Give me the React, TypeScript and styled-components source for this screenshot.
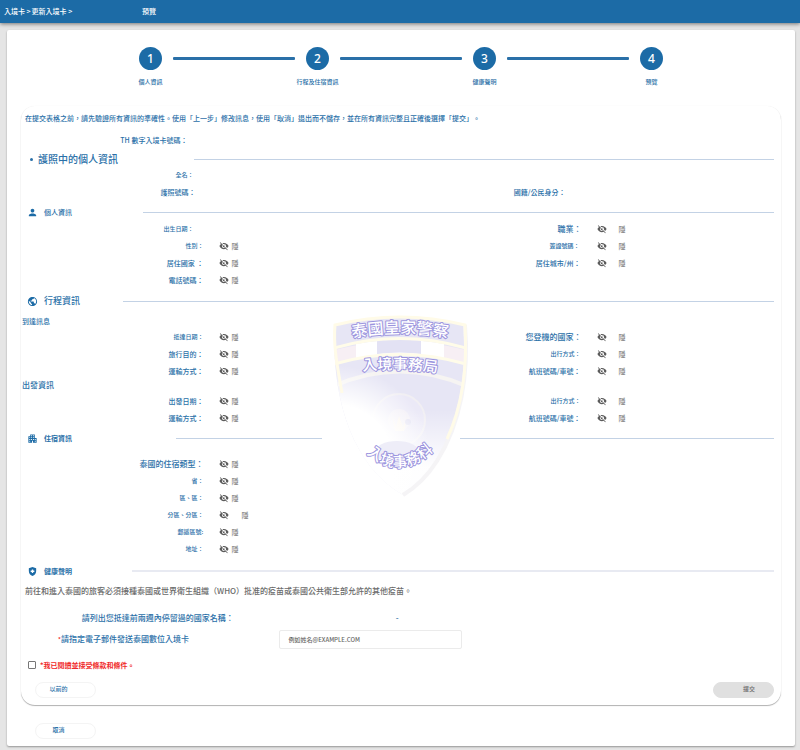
import React from "react";
import styled, { createGlobalStyle } from "styled-components";
import {
  MdApartment,
  MdHealthAndSafety,
  MdPerson,
  MdPublic,
  MdVisibilityOff,
} from "react-icons/md";

const blue = "#1c6ba6";
const textBlue = "#2a70a8";
const gray = "#6a6a6a";

const GlobalStyle = createGlobalStyle`
  * { box-sizing: border-box; }
  body {
    margin: 0;
    background: #e5e5e5;
    color: ${textBlue};
    font-family: "Noto Sans CJK TC", "Noto Sans", sans-serif;
    font-size: 7px;
    font-weight: 500;
    line-height: 12px;
    text-spacing-trim: space-all;
  }
  button, input { font-family: inherit; }
`;

const TopBar = styled.header`
  position: relative;
  display: flex;
  align-items: center;
  height: 23px;
  padding: 0 4px 2px;
  background: ${blue};
  color: #fff;
  box-shadow: 0 1px 4px rgba(0, 0, 0, 0.5);
`;

const Crumbs = styled.nav`
  display: flex;
  gap: 1px;
  width: 138px;
`;

const CrumbLink = styled.a`
  color: inherit;
  text-decoration: none;
`;

const Page = styled.main`
  padding: 7px 5px 4px 7px;
`;

const Card = styled.div`
  padding: 17px 14px 7px;
  background: #fff;
  border-radius: 2px;
  box-shadow: 0 1px 2px rgba(0, 0, 0, 0.35);
`;

const Stepper = styled.ol`
  display: flex;
  margin: 0 0 19px;
  padding: 0 118px;
  list-style: none;
`;

const Step = styled.li`
  display: flex;
  flex-direction: column;
  align-items: center;
  gap: 7px;
  width: 23px;
  font-size: 6px;
  line-height: 10px;
  white-space: nowrap;
`;

const StepNumber = styled.span`
  display: grid;
  place-items: center;
  width: 23px;
  height: 23px;
  border-radius: 50%;
  background: ${blue};
  color: #fff;
  font-family: "Noto Sans", sans-serif;
  font-size: 12px;
  line-height: 23px;
`;

const Connector = styled.li`
  flex: 1;
  height: 3px;
  margin: 10px 11px 0;
  border-radius: 1px;
  background: ${textBlue};
`;

const Panel = styled.form`
  position: relative;
  padding: 5px 0 7px;
  border-radius: 14px;
  box-shadow: 0 1px 1px rgba(0, 0, 0, 0.3), 0 0 1px rgba(0, 0, 0, 0.08);
`;

const Intro = styled.p`
  margin: 0 4px 6px;
  line-height: 14px;
`;

const Head = styled.div<{ $top: number; $gap?: number }>`
  display: flex;
  align-items: center;
  gap: ${(p) => p.$gap ?? 6}px;
  height: 14px;
  margin-top: ${(p) => p.$top}px;
  padding: 0 7px 0 6px;
`;

const HeadIcon = styled.span`
  display: grid;
  place-items: center;
  width: 11px;
  color: ${blue};
`;

const Bullet = styled.span`
  width: 3px;
  height: 3px;
  margin: 0 5px 0 3px;
  border-radius: 50%;
  background: ${textBlue};
`;

const HeadTitle = styled.h2<{ $size: number; $width: number; $strong?: boolean }>`
  width: ${(p) => p.$width}px;
  margin: 0;
  font-size: ${(p) => p.$size}px;
  font-weight: ${(p) => (p.$strong ? 700 : 500)};
  line-height: 14px;
  white-space: nowrap;
`;

const Rule = styled.span<{ $soft?: boolean }>`
  flex: 1;
  height: ${(p) => (p.$soft ? 2 : 1)}px;
  background: ${(p) => (p.$soft ? "#e8eaf2" : "#c3d2e5")};
`;

const SubHead = styled.h3<{ $top?: number; $size: number }>`
  height: 12px;
  margin: ${(p) => p.$top ?? 0}px 1px 0;
  font-size: ${(p) => p.$size}px;
  font-weight: 500;
`;

const Fields = styled.dl<{ $top?: number }>`
  display: grid;
  grid-template-columns: 1fr 1fr;
  grid-auto-rows: 17px;
  margin: ${(p) => p.$top ?? 0}px 0 0;
`;

const Cell = styled.div<{ $right?: boolean }>`
  display: flex;
  grid-column: ${(p) => (p.$right ? 2 : 1)};
  align-items: center;
`;

const Term = styled.dt<{ $size: number; $right?: boolean; $inset?: number }>`
  flex: none;
  width: ${(p) => (p.$right ? "47.5%" : "48%")};
  padding-right: ${(p) => p.$inset ?? 0}px;
  font-size: ${(p) => p.$size}px;
  text-align: right;
  white-space: nowrap;
`;

const Value = styled.dd<{ $gap: number }>`
  display: flex;
  align-items: center;
  gap: ${(p) => p.$gap}px;
  margin: 0 0 0 15px;
  color: ${gray};
  font-weight: 400;
`;

const EyeButton = styled.button`
  display: grid;
  place-items: center;
  width: 11px;
  height: 11px;
  padding: 0;
  border: 0;
  background: none;
  color: #5c5c5c;
`;

const Note = styled.p`
  margin: 6px 4px 0;
  color: ${gray};
  font-size: 8px;
  line-height: 14px;
`;

const Countries = styled.dl`
  display: grid;
  grid-template-columns: 28% 43%;
  margin: 13px 0 0;
  font-size: 8px;
  line-height: 14px;
`;

const CountriesTerm = styled.dt`
  text-align: right;
  white-space: nowrap;
`;

const CountriesValue = styled.dd`
  margin: 0;
  text-align: center;
`;

const EmailRow = styled.div`
  display: grid;
  grid-template-columns: 34% 24%;
  align-items: center;
  margin-top: 5px;
`;

const EmailLabel = styled.label`
  padding-left: 37px;
  font-size: 8px;
  white-space: nowrap;
`;

const Star = styled.span`
  color: #f02020;
  font-size: 6px;
`;

const EmailInput = styled.input`
  width: 100%;
  height: 19px;
  padding: 0 8px;
  border: 1px solid #ebebeb;
  border-radius: 2px;
  background: #fff;
  color: #555;
  font-size: 6px;
  font-weight: 500;
  &::placeholder { color: #666; opacity: 1; }
`;

const TermsRow = styled.label`
  display: flex;
  align-items: center;
  gap: 4px;
  height: 12px;
  margin: 10px 0 0 7px;
  color: #f02a2a;
  font-weight: 700;
`;

const Checkbox = styled.input`
  appearance: none;
  width: 8px;
  height: 8px;
  margin: 0;
  border: 1px solid #777;
  border-radius: 1px;
  background: #fff;
`;

const Actions = styled.div<{ $top: number }>`
  display: flex;
  justify-content: space-between;
  margin: ${(p) => p.$top}px 7px 0 14px;
`;

const Pill = styled.button<{ $filled?: boolean }>`
  width: 61px;
  height: 16px;
  padding: ${(p) => (p.$filled ? "0 0 2px 11px" : "0 14px 2px 0")};
  border: 1px solid ${(p) => (p.$filled ? "#e0e0e0" : "#f4f4f4")};
  border-radius: 8px;
  background: ${(p) => (p.$filled ? "#e0e0e0" : "#fff")};
  color: ${(p) => (p.$filled ? "#666" : textBlue)};
  font-size: 6px;
  font-weight: 500;
  line-height: 12px;
`;

const Watermark = styled.svg`
  position: absolute;
  top: 199px;
  left: 50%;
  width: 160px;
  height: 200px;
  margin-left: -81px;
  pointer-events: none;
`;

const OutlineText = styled.text`
  fill: #fff;
  stroke: #9c95de;
  stroke-width: 2px;
  stroke-linejoin: round;
  paint-order: stroke;
  font-weight: 500;
`;

type Item = {
  label: string;
  size?: number;
  right?: boolean;
  inset?: number;
  gap?: number;
  hidden?: boolean;
};

const FieldCell = ({ label, size = 7, right, inset, gap, hidden = true }: Item) => (
  <Cell $right={right}>
    <Term $size={size} $right={right} $inset={inset}>{label}</Term>
    {hidden && (
      <Value $gap={gap ?? (right ? 11 : 2)}>
        <EyeButton type="button" aria-label="顯示">
          <MdVisibilityOff size={10} />
        </EyeButton>
        隱
      </Value>
    )}
  </Cell>
);

const FieldGroup = ({ items, top }: { items: Item[]; top?: number }) => (
  <Fields $top={top}>
    {items.map((item, i) => (
      <FieldCell key={i} {...item} />
    ))}
  </Fields>
);

const passport: Item[] = [
  { label: "全名：", size: 6, inset: 10, hidden: false },
  { label: "護照號碼：", inset: 8, hidden: false },
  { label: "國籍/公民身分：", right: true, inset: 16, hidden: false },
];

const personal: Item[] = [
  { label: "出生日期：", size: 6, inset: 10, hidden: false },
  { label: "職業：", size: 8, right: true },
  { label: "性別：", size: 6 },
  { label: "簽證號碼：", size: 6, right: true, inset: 2 },
  { label: "居住國家 ：" },
  { label: "居住城市/州：", right: true, inset: 1 },
  { label: "電話號碼：" },
];

const arrival: Item[] = [
  { label: "抵達日期：", size: 6 },
  { label: "您登機的國家：", size: 8, right: true },
  { label: "旅行目的：" },
  { label: "出行方式：", size: 6, right: true, inset: 1 },
  { label: "運輸方式：" },
  { label: "航班號碼/車號：", right: true, inset: 1 },
];

const departure: Item[] = [
  { label: "出發日期：" },
  { label: "出行方式：", size: 6, right: true, inset: 1 },
  { label: "運輸方式：" },
  { label: "航班號碼/車號：", right: true, inset: 1 },
];

const lodging: Item[] = [
  { label: "泰國的住宿類型：", size: 8 },
  { label: "省：", size: 6 },
  { label: "區、區：", size: 6 },
  { label: "分區、分區：", size: 6, gap: 12 },
  { label: "郵遞區號:", size: 6 },
  { label: "地址：", size: 6 },
];

const steps = ["個人資訊", "行程及住宿資訊", "健康聲明", "預覽"];

const Shield = () => (
  <Watermark viewBox="0 0 160 200" aria-hidden="true">
    <defs>
      <clipPath id="shield">
        <path d="M15 20 Q80 4 145 20 C149 72 141 156 83 190 C26 157 11 80 15 20Z" />
      </clipPath>
      <radialGradient id="fade" gradientUnits="userSpaceOnUse" cx="14" cy="158" r="98">
        <stop offset="0.6" stopColor="#fff" />
        <stop offset="1" stopColor="#fff" stopOpacity="0" />
      </radialGradient>
      <linearGradient id="low" x1="0" y1="0" x2="0" y2="1">
        <stop offset="0" stopColor="#fff" stopOpacity="0" />
        <stop offset="0.6" stopColor="#fff" stopOpacity="0.95" />
        <stop offset="1" stopColor="#fff" />
      </linearGradient>
      <path id="arcTop" d="M31 33 Q80 24 129 33" />
      <path id="arcMiddle" d="M42 66 Q80 62 118 68" />
      <path id="arcBottom" d="M44 146 Q80 180 116 143" />
    </defs>
    <rect x="2" y="126" width="138" height="16" fill="#fff" />
    <g clipPath="url(#shield)">
      <rect width="160" height="200" fill="#e7e6f5" />
      <path d="M14 45 Q80 28 146 45 V58 Q80 41 14 58Z" fill="#f7eff4" />
      <path d="M36 39 Q80 31 124 39 V53 Q80 44 36 53Z" fill="#fff" />
      <path d="M57 36 Q80 33 101 36 V49 Q80 46 57 49Z" fill="#e3e2f4" />
      <g fill="none" stroke="#fffce9" strokeWidth="3">
        <path d="M14 43 Q80 24 146 43" />
        <path d="M14 59 Q80 40 146 59" />
      </g>
      <path d="M14 81 Q80 52 146 81" fill="none" stroke="#f6f4f2" strokeWidth="4" />
      <circle cx="79" cy="115" r="26" fill="#ebe9f7" stroke="#f1eff3" strokeWidth="2" />
      <circle cx="79" cy="115" r="11" fill="#f2eff6" />
      <path d="M72 110l4 12 3-11 4 11 4-10-3 14h-9z" fill="#fbf4e9" />
      <circle cx="88" cy="117" r="3" fill="#dfddf1" />
      <rect x="0" y="105" width="160" height="95" fill="url(#low)" />
      <circle cx="14" cy="158" r="98" fill="url(#fade)" />
      <ellipse cx="77" cy="147" rx="22" ry="11" fill="#eeedf8" />
    </g>
    <path
      d="M145 20 C149 69 141 118 117 156 Q103 178 83 190"
      fill="none"
      stroke="#f5f4f6"
      strokeWidth="4"
    />
    <path
      d="M22 88 C18 65 13 42 15 20 Q80 4 145 20 C148 69 141 104 127 134"
      fill="none"
      stroke="#fffbe8"
      strokeWidth="3"
    />
    <OutlineText fontSize="16" textAnchor="middle">
      <textPath href="#arcTop" startOffset="50%">泰國皇家警察</textPath>
    </OutlineText>
    <OutlineText fontSize="15" textAnchor="middle">
      <textPath href="#arcMiddle" startOffset="50%">入境事務局</textPath>
    </OutlineText>
    <OutlineText fontSize="15" textAnchor="middle">
      <textPath href="#arcBottom" startOffset="50%">入境事務科</textPath>
    </OutlineText>
  </Watermark>
);

export default function App() {
  return (
    <>
      <GlobalStyle />
      <TopBar>
        <Crumbs>
          <CrumbLink href="#card">入境卡 &gt;</CrumbLink>
          <CrumbLink href="#update">更新入境卡 &gt;</CrumbLink>
        </Crumbs>
        <span>預覽</span>
      </TopBar>
      <Page>
        <Card>
          <Stepper>
            {steps.map((label, i) => (
              <React.Fragment key={label}>
                {i > 0 && <Connector aria-hidden="true" />}
                <Step>
                  <StepNumber>{i + 1}</StepNumber>
                  {label}
                </Step>
              </React.Fragment>
            ))}
          </Stepper>

          <Panel>
            <Shield />
            <Intro>
              在提交表格之前，請先驗證所有資訊的準確性。使用「上一步」修改訊息，使用「取消」退出而不儲存，並在所有資訊完整且正確後選擇「提交」。
            </Intro>
            <FieldGroup items={[{ label: "TH 數字入境卡號碼：", inset: 16, hidden: false }]} />

            <Head $top={4} $gap={0}>
              <Bullet />
              <HeadTitle $size={10} $width={156}>護照中的個人資訊</HeadTitle>
              <Rule />
            </Head>
            <FieldGroup items={passport} />

            <Head $top={5}>
              <HeadIcon><MdPerson size={11} /></HeadIcon>
              <HeadTitle $size={7} $width={93}>個人資訊</HeadTitle>
              <Rule />
            </Head>
            <FieldGroup top={1} items={personal} />

            <Head $top={6}>
              <HeadIcon><MdPublic size={11} /></HeadIcon>
              <HeadTitle $size={9} $width={73}>行程資訊</HeadTitle>
              <Rule />
            </Head>
            <SubHead $size={7} $top={7}>到達訊息</SubHead>
            <FieldGroup top={1} items={arrival} />
            <SubHead $size={8}>出發資訊</SubHead>
            <FieldGroup top={1} items={departure} />

            <Head $top={5}>
              <HeadIcon><MdApartment size={11} /></HeadIcon>
              <HeadTitle $size={7} $width={126} $strong>住宿資訊</HeadTitle>
              <Rule />
            </Head>
            <FieldGroup top={10} items={lodging} />

            <Head $top={7}>
              <HeadIcon><MdHealthAndSafety size={11} /></HeadIcon>
              <HeadTitle $size={7} $width={82} $strong>健康聲明</HeadTitle>
              <Rule $soft />
            </Head>
            <Note>
              前往和進入泰國的旅客必須接種泰國或世界衛生組織（WHO）批准的疫苗或泰國公共衛生部允許的其他疫苗。
            </Note>
            <Countries>
              <CountriesTerm>請列出您抵達前兩週內停留過的國家名稱：</CountriesTerm>
              <CountriesValue>-</CountriesValue>
            </Countries>
            <EmailRow>
              <EmailLabel htmlFor="email">
                <Star>*</Star>請指定電子郵件發送泰國數位入境卡
              </EmailLabel>
              <EmailInput id="email" type="email" placeholder="例如姓名@EXAMPLE.COM" />
            </EmailRow>
            <TermsRow>
              <Checkbox type="checkbox" />
              <span>*我已閱讀並接受條款和條件。</span>
            </TermsRow>
            <Actions $top={11}>
              <Pill type="button">以前的</Pill>
              <Pill type="submit" $filled>提交</Pill>
            </Actions>
          </Panel>
          <Actions $top={18}>
            <Pill type="button">取消</Pill>
          </Actions>
        </Card>
      </Page>
    </>
  );
}
